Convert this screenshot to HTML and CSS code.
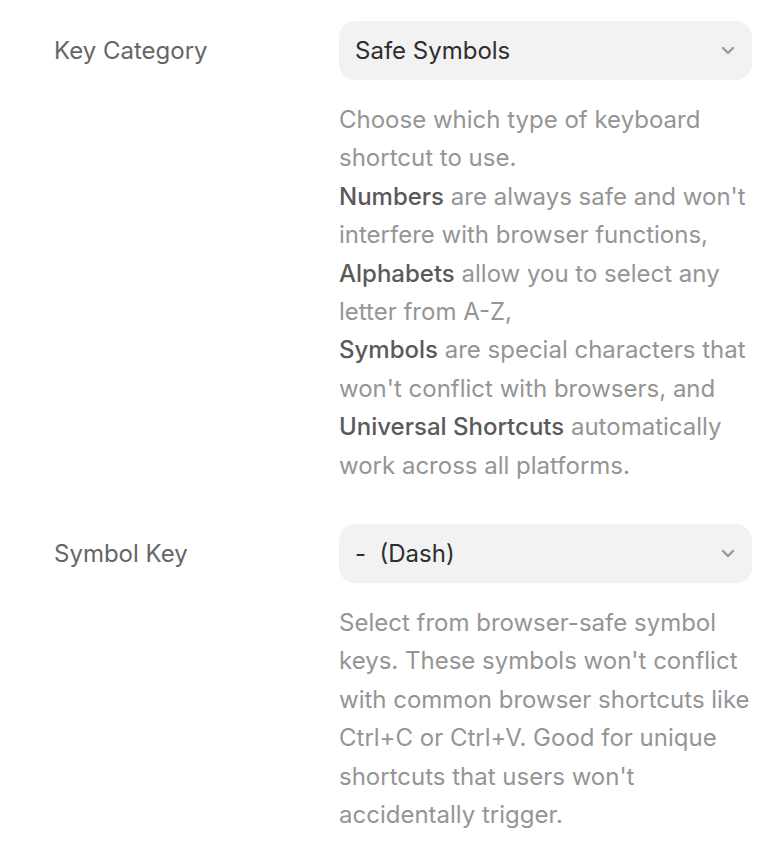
FILE: index.html
```html
<!DOCTYPE html>
<html>
<head>
<meta charset="utf-8">
<link rel="stylesheet" href="styles.css">
</head>
<body>
<div class="settings">
  <div class="row">
    <div class="label">Key Category</div>
    <div class="control">
      <div class="select">
        <span class="value">Safe Symbols</span>
        <svg class="chev" width="14" height="9" viewBox="0 0 14 9"><path d="M2 2 L7 7 L12 2" fill="none" stroke="#9a9a9a" stroke-width="2.4" stroke-linecap="round" stroke-linejoin="round"/></svg>
      </div>
      <p class="desc">Choose which type of keyboard shortcut to use.<br><b>Numbers</b> are always safe and won't interfere with browser functions,<br><b>Alphabets</b> allow you to select any letter from A-Z,<br><b>Symbols</b> are special characters that won't conflict with browsers, and<br><b>Universal Shortcuts</b> automatically work across all platforms.</p>
    </div>
  </div>
  <div class="row">
    <div class="label">Symbol Key</div>
    <div class="control">
      <div class="select">
        <span class="value">-&nbsp; (Dash)</span>
        <svg class="chev" width="14" height="9" viewBox="0 0 14 9"><path d="M2 2 L7 7 L12 2" fill="none" stroke="#9a9a9a" stroke-width="2.4" stroke-linecap="round" stroke-linejoin="round"/></svg>
      </div>
      <p class="desc">Select from browser-safe symbol keys. These symbols won't conflict with common browser shortcuts like Ctrl+C or Ctrl+V. Good for unique shortcuts that users won't accidentally trigger.</p>
    </div>
  </div>
</div>
</body>
</html>
```
FILE: styles.css
```css
html, body {
  margin: 0;
  padding: 0;
  background: #ffffff;
}
body {
  font-family: Inter, "Noto Sans", sans-serif;
}
.settings {
  padding: 21px 24px 0 54px;
  display: flex;
  flex-direction: column;
  gap: 39px;
}
.row {
  display: grid;
  grid-template-columns: 285px 1fr;
}
.label {
  font-size: 24px;
  color: #666666;
  height: 59px;
  display: flex;
  align-items: center;
}
.control {
  display: flex;
  flex-direction: column;
}
.select {
  height: 59px;
  background: #f2f2f2;
  border-radius: 16px;
  display: flex;
  align-items: center;
  justify-content: space-between;
  padding: 0 17px 0 16px;
}
.value {
  font-size: 24px;
  font-weight: 400;
  color: #2e2e2e;
}
.chev {
  display: block;
}
.desc {
  margin: 21px 0 0 0;
  font-size: 24px;
  line-height: 38.4px;
  color: #959595;
}
.desc b {
  font-weight: 500;
  color: #5a5a5a;
}
```
